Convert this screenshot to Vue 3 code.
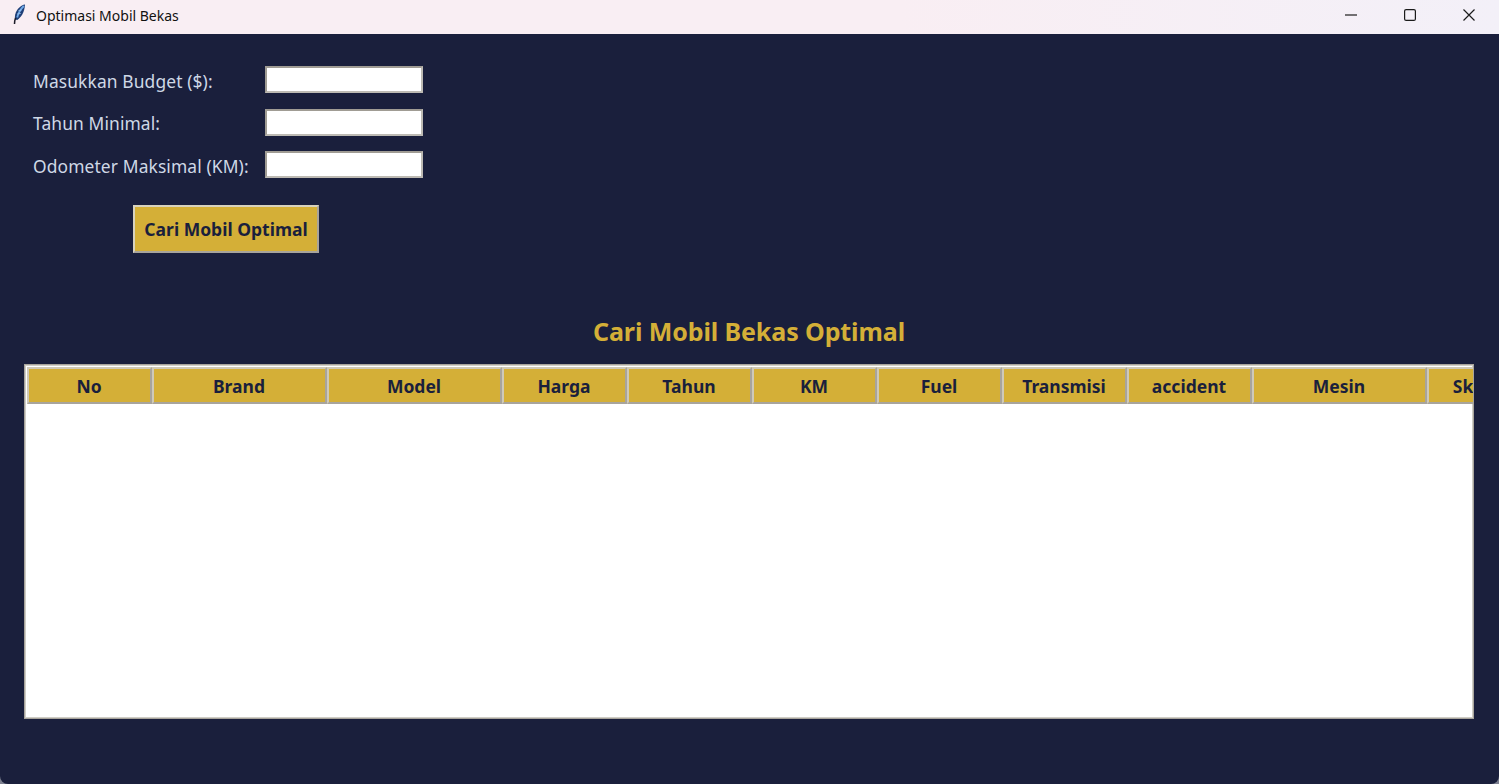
<script setup>
const fields = ['Masukkan Budget ($):', 'Tahun Minimal:', 'Odometer Maksimal (KM):']
const columns = [
  { name: 'No', width: 125 },
  { name: 'Brand', width: 175 },
  { name: 'Model', width: 175 },
  { name: 'Harga', width: 125 },
  { name: 'Tahun', width: 125 },
  { name: 'KM', width: 125 },
  { name: 'Fuel', width: 125 },
  { name: 'Transmisi', width: 125 },
  { name: 'accident', width: 125 },
  { name: 'Mesin', width: 175 },
  { name: 'Skor', width: 92 },
]
</script>

<template>
  <div class="window">
    <header class="titlebar">
      <div class="title-left">
        <svg class="feather" width="16" height="24" viewBox="0 0 16 24">
          <path d="M15 1.500C11 2 6.500 6 5.200 11.500c-.4 2-.4 3.500-.1 5l2.200.5C11.500 14 14.500 9 15 1.500z" fill="#1f3f78" />
          <path d="M13.800 3C10.800 6 8.300 10 7.200 14.500" stroke="#6fa8e8" stroke-width="1.800" fill="none" />
          <path d="M8.500 7.500l3-.5M7.300 11l3.500-.5" stroke="#b4d2f2" stroke-width=".7" fill="none" />
          <path d="M4.500 21c0-2 .3-4 1-6" stroke="#1c1c28" stroke-width="1.500" fill="none" />
        </svg>
        <span class="title-text">Optimasi Mobil Bekas</span>
      </div>
      <div class="controls">
        <div class="ctrl">
          <svg width="12" height="12" viewBox="0 0 12 12"><path d="M0 6h12" stroke="#1b1b1b" stroke-width="1.200" /></svg>
        </div>
        <div class="ctrl">
          <svg width="12" height="12" viewBox="0 0 12 12"><rect x=".6" y=".6" width="10.800" height="10.800" rx="1.500" fill="none" stroke="#1b1b1b" stroke-width="1.200" /></svg>
        </div>
        <div class="ctrl">
          <svg width="12" height="12" viewBox="0 0 12 12"><path d="M.5.5l11 11M11.500.5l-11 11" stroke="#1b1b1b" stroke-width="1.200" /></svg>
        </div>
      </div>
    </header>

    <main class="content">
      <section class="form">
        <template v-for="field in fields" :key="field">
          <label class="label">{{ field }}</label>
          <input class="entry" type="text" />
        </template>
      </section>

      <button class="search" type="button">Cari Mobil Optimal</button>

      <h1 class="heading">Cari Mobil Bekas Optimal</h1>

      <section class="table">
        <div class="thead">
          <div
            v-for="col in columns"
            :key="col.name"
            class="th"
            :style="{ width: col.width + 'px' }"
          >{{ col.name }}</div>
        </div>
      </section>
    </main>
  </div>
</template>

<style>
body {
  background: #7d8090;
}
</style>

<style scoped>
.window {
  width: 1499px;
  height: 784px;
  display: flex;
  flex-direction: column;
  background: #1a1f3c;
  border-radius: 0 0 8px 8px;
  overflow: hidden;
  font-family: "Noto Sans", sans-serif;
}
.titlebar {
  box-sizing: border-box;
  height: 34px;
  flex: none;
  padding-bottom: 4px;
  display: flex;
  justify-content: space-between;
  align-items: center;
  background: linear-gradient(90deg, #f9eef3 0%, #f9eef3 60%, #f3f0f8 100%);
}
.title-left {
  display: flex;
  align-items: center;
  padding-left: 10px;
}
.feather {
  flex: none;
}
.title-text {
  margin-left: 10px;
  font-size: 14px;
  color: #111;
}
.controls {
  display: flex;
  margin-right: 1px;
}
.ctrl {
  width: 59px;
  height: 30px;
  display: flex;
  align-items: center;
  justify-content: center;
}
.content {
  flex: 1;
  display: flex;
  flex-direction: column;
  padding: 32px 25px 0 24px;
}
.form {
  display: grid;
  grid-template-columns: 232px 158px;
  row-gap: 15.500px;
  padding-left: 9px;
  align-items: center;
}
.label {
  position: relative;
  top: 1.500px;
  font-size: 17.400px;
  color: #cfd8e6;
  letter-spacing: 0.120px;
  line-height: 27px;
  white-space: nowrap;
}
.entry {
  box-sizing: border-box;
  width: 158px;
  height: 27px;
  margin: 0;
  padding: 0;
  background: #fff;
  border: 2px solid;
  border-color: #a09c94 #bdbab3 #bdbab3 #a09c94;
  outline: none;
}
.search {
  box-sizing: border-box;
  align-self: flex-start;
  width: 186px;
  height: 48px;
  margin: 27px 0 0 109px;
  padding: 0;
  background: #d4af37;
  color: #1a1f3c;
  border: 2px solid;
  border-color: #d8d2bd #a8a49c #a8a49c #d8d2bd;
  font-family: "Noto Sans", sans-serif;
  font-weight: 700;
  font-size: 17.500px;
}
.heading {
  margin: 61px 0 0;
  height: 36px;
  line-height: 35px;
  text-align: center;
  color: #d4af37;
  font-size: 25px;
  font-weight: 700;
  letter-spacing: -0.100px;
}
.table {
  box-sizing: border-box;
  width: 1450px;
  height: 355px;
  margin-top: 14px;
  padding: 2px 0 0 2px;
  background: #fff;
  border: 1px solid #a8a49c;
  box-shadow: inset 1px 1px 0 #cfcdc6, inset -1px -1px 0 #cfcdc6;
  overflow: hidden;
}
.thead {
  display: flex;
  width: max-content;
}
.th {
  box-sizing: border-box;
  height: 37px;
  flex: none;
  display: flex;
  align-items: center;
  justify-content: center;
  padding: 0 1px 0 0;
  background: #d4af37;
  border: 2px solid;
  border-color: #cfc9b8 #a8a49c #a8a49c #cfc9b8;
  color: #1a1f3c;
  font-weight: 700;
  font-size: 17.500px;
}
</style>
